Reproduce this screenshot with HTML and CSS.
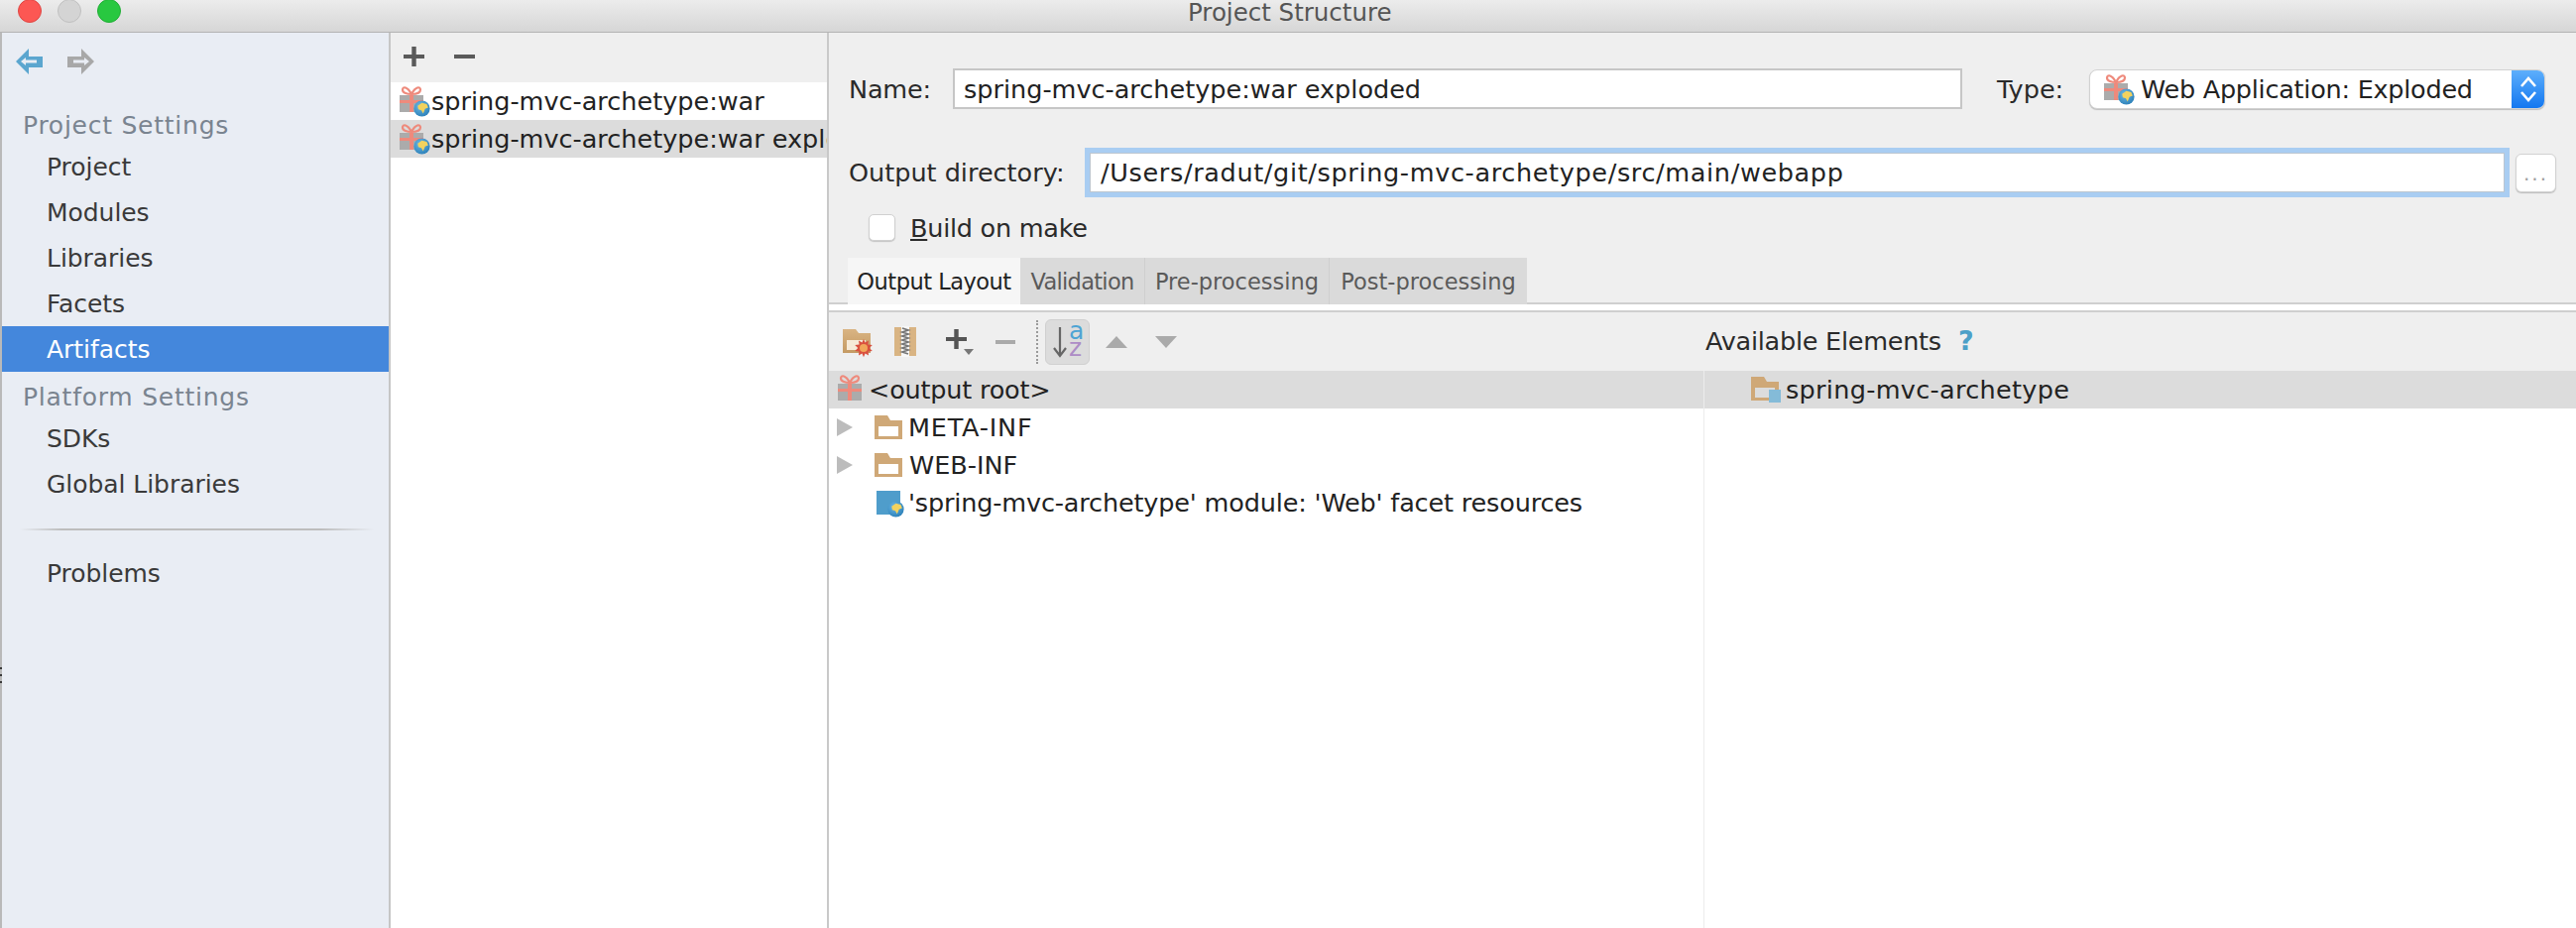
FILE: index.html
```html
<!DOCTYPE html>
<html lang="en">
<head>
<meta charset="utf-8">
<title>Project Structure</title>
<link rel="stylesheet" href="styles.css">
</head>
<body>
<svg class="defs" width="0" height="0" aria-hidden="true">
  <defs>
    <radialGradient id="sea" cx="40%" cy="35%" r="70%"><stop offset="0" stop-color="#6db8e4"/><stop offset="1" stop-color="#2a7fb8"/></radialGradient>
    <linearGradient id="tan" x1="0" y1="0" x2="0" y2="1"><stop offset="0" stop-color="#d9b483"/><stop offset="1" stop-color="#c49a63"/></linearGradient>
    <symbol id="globe" viewBox="0 0 16 16">
      <circle cx="8" cy="8" r="7.6" fill="url(#sea)"/>
      <path d="M4 5.500 8 2.600l4.600 1.200L14 7l-3 1.200-1.800 4.600-1.700-3.200L4.600 8.600z" fill="#f2d25e"/>
    </symbol>
    <symbol id="gift" viewBox="0 0 32 32">
      <rect x="1" y="10" width="24" height="17" fill="#ababab"/>
      <rect x="11" y="10" width="4" height="17" fill="#ee8a7c"/>
      <rect x="1" y="15" width="24" height="3" fill="#ee8a7c"/>
      <path d="M13 9C9 9 4 8 4 4.500 4 1 9 1 13 9c4-8 9-8 9-4.500S17 9 13 9z" fill="none" stroke="#ee8a7c" stroke-width="2.200"/>
    </symbol>
    <symbol id="gift-web" viewBox="0 0 32 32">
      <use href="#gift" width="32" height="32"/>
      <use href="#globe" x="15" y="15" width="17" height="17"/>
    </symbol>
    <symbol id="folder" viewBox="0 0 28 24">
      <path fill="#cfa877" fill-rule="evenodd" d="M0 0h13l3 5h12v19H0zM4 11v10h20V11z"/>
    </symbol>
  </defs>
</svg>
<div class="window">
  <span class="edge-mark"></span>
  <header class="titlebar">
    <div class="lights">
      <span class="light light-red"></span>
      <span class="light light-gray"></span>
      <span class="light light-green"></span>
    </div>
    <div class="title">Project Structure</div>
  </header>
  <div class="main">
    <aside class="sidebar">
      <div class="history">
        <svg class="hist-icon" viewBox="0 0 27 26"><path fill="#5ba6cf" d="M13 0 0 13l13 13v-7h14V8H13z"/><path fill="#e9edf4" d="M9 11.500h12v3H9z"/><path fill="#e9edf4" d="M5 13l5-4v8z"/></svg>
        <svg class="hist-icon" viewBox="0 0 27 26"><path fill="#a8a8a8" d="M14 0l13 13-13 13v-7H0V8h14z"/><path fill="#e9edf4" d="M6 11.500h12v3H6z"/><path fill="#e9edf4" d="M22 13l-5-4v8z"/></svg>
      </div>
      <div class="nav-heading">Project Settings</div>
      <div class="nav-item">Project</div>
      <div class="nav-item">Modules</div>
      <div class="nav-item">Libraries</div>
      <div class="nav-item">Facets</div>
      <div class="nav-item nav-selected">Artifacts</div>
      <div class="nav-heading">Platform Settings</div>
      <div class="nav-item">SDKs</div>
      <div class="nav-item">Global Libraries</div>
      <div class="nav-sep"></div>
      <div class="nav-item">Problems</div>
    </aside>
    <section class="artifacts">
      <div class="artifacts-bar">
        <svg class="glyph" viewBox="0 0 21 20"><path fill="#5a5a5a" d="M8.300 0h4.400v7.900H21v4.200h-8.300V20H8.300v-7.900H0V7.900h8.300z"/></svg>
        <svg class="glyph glyph-minus" viewBox="0 0 21 20"><path fill="#5a5a5a" d="M0 8h21v4H0z"/></svg>
      </div>
      <div class="art-row"><svg class="gift-icon"><use href="#gift-web"/></svg><span class="art-text">spring-mvc-archetype:war</span></div>
      <div class="art-row row-selected"><svg class="gift-icon"><use href="#gift-web"/></svg><span class="art-text">spring-mvc-archetype:war exploded</span></div>
    </section>
    <section class="editor">
      <div class="form-row row-name">
        <label class="label label-name">Name:</label>
        <div class="field field-name">spring-mvc-archetype:war exploded</div>
        <label class="label label-type">Type:</label>
        <div class="combo">
          <svg class="combo-icon"><use href="#gift-web"/></svg>
          <span class="combo-text">Web Application: Exploded</span>
          <span class="stepper">
            <svg width="16" height="36" viewBox="0 0 16 36"><path d="M1 15l7-8 7 8M1 21l7 8 7-8" fill="none" stroke="#fff" stroke-width="2.600"/></svg>
          </span>
        </div>
      </div>
      <div class="form-row row-output">
        <label class="label label-output">Output directory:</label>
        <div class="field field-output">/Users/radut/git/spring-mvc-archetype/src/main/webapp</div>
        <div class="browse">...</div>
      </div>
      <div class="form-row row-check">
        <span class="checkbox"></span>
        <span class="check-label"><u>B</u>uild on make</span>
      </div>
      <div class="tabs">
        <div class="tab tab-active tab-output">Output Layout</div>
        <div class="tab tab-validation">Validation</div>
        <div class="tab tab-pre">Pre-processing</div>
        <div class="tab tab-post">Post-processing</div>
      </div>
      <div class="tab-band"></div>
      <div class="tools">
        <div class="tools-left">
          <svg class="tool tool-burst" viewBox="0 0 30 28">
            <path fill="url(#tan)" d="M1 1h13l3 4h12v20H1z"/>
            <path fill="#f6ead8" d="M5 12h19v10H5z"/>
            <g transform="translate(2 2)">
              <path fill="#d9503f" d="M20 9l1.600 3.600 3.400-2-.6 4 4.400.4-3 3 3 3-4.200.4.400 4-3.400-2-1.600 3.800-1.600-3.800-3.400 2 .4-4-4.200-.4 3-3-3-3 4.400-.4-.6-4 3.400 2z"/>
              <circle cx="20" cy="18" r="4" fill="#f2a65a"/>
            </g>
          </svg>
          <svg class="tool tool-zip" viewBox="0 0 22 31">
            <path fill="#d9b483" d="M0 1h7v29H0zM15 1h7v29h-7z"/>
            <path fill="#f7f7f7" d="M7 0h8v31H7z"/>
            <path fill="none" stroke="#777" stroke-width="1.800" d="M8 2l6 2-6 2 6 2-6 2 6 2-6 2 6 2-6 2 6 2-6 2 6 2-6 2 6 2"/>
          </svg>
          <svg class="tool tool-plus" viewBox="0 0 28 26">
            <path fill="#555" d="M8.300 0h4.400v7.900H21v4.200h-8.300V20H8.300v-7.900H0V7.900h8.300z"/>
            <path fill="#777" d="M18 20h10l-5 6z"/>
          </svg>
          <svg class="tool tool-minus" viewBox="0 0 20 4"><path fill="#aaa" d="M0 0h20v4H0z"/></svg>
          <span class="tool-dots"></span>
          <span class="sort-btn">
            <svg class="sort-icon" width="30" height="38" viewBox="0 0 30 38">
              <path d="M7 4v29M1 25l6 8 6-8" fill="none" stroke="#666" stroke-width="2.200"/>
              <text x="16" y="16" class="sort-a">a</text>
              <text x="16" y="33" class="sort-z">z</text>
            </svg>
          </span>
          <svg class="tool tool-up" viewBox="0 0 22 12"><path fill="#aaa" d="M11 0l11 12H0z"/></svg>
          <svg class="tool tool-down" viewBox="0 0 22 12"><path fill="#aaa" d="M0 0h22L11 12z"/></svg>
        </div>
        <div class="tools-right">
          <span class="avail">Available Elements</span>
          <span class="help">?</span>
        </div>
      </div>
      <div class="panes">
        <div class="pane pane-left">
          <div class="tree-row row-selected">
            <svg class="tree-gift"><use href="#gift"/></svg>
            <span class="tree-text text-root">&lt;output root&gt;</span>
          </div>
          <div class="tree-row">
            <span class="arrow"></span>
            <svg class="tree-folder"><use href="#folder"/></svg>
            <span class="tree-text text-meta">META-INF</span>
          </div>
          <div class="tree-row">
            <span class="arrow"></span>
            <svg class="tree-folder"><use href="#folder"/></svg>
            <span class="tree-text">WEB-INF</span>
          </div>
          <div class="tree-row tree-facet">
            <span class="facet">
              <svg class="facet-globe"><use href="#globe"/></svg>
            </span>
            <span class="tree-text text-facet">'spring-mvc-archetype' module: 'Web' facet resources</span>
          </div>
        </div>
        <div class="pane pane-right">
          <div class="tree-row row-selected row-avail">
            <span class="avail-folder">
              <svg class="tree-folder"><use href="#folder"/></svg>
              <span class="folder-mod"></span>
            </span>
            <span class="tree-text text-avail">spring-mvc-archetype</span>
          </div>
        </div>
      </div>
    </section>
  </div>
</div>
</body>
</html>
```
FILE: styles.css
```css
* { box-sizing: border-box; }
html, body { margin: 0; padding: 0; background: #fff; }
body {
  font-family: "DejaVu Sans", "Liberation Sans", sans-serif;
  font-size: 25.5px;
  color: #2a2a2a;
  overflow: hidden;
}
.defs { position: absolute; }
.window { width: 2598px; height: 936px; display: flex; flex-direction: column; position: relative; }
.edge-mark {
  position: absolute;
  left: 0;
  top: 673px;
  width: 2px;
  height: 17px;
  background: repeating-linear-gradient(#3a3a3a 0 2px, transparent 2px 7px);
}

.titlebar {
  height: 33px;
  flex: none;
  display: flex;
  align-items: center;
  background: linear-gradient(#ececec, #d6d6d6);
  border-bottom: 1px solid #b4b4b4;
  position: relative;
  overflow: hidden;
}
.lights { display: flex; gap: 16px; padding-left: 18px; margin-top: -11px; }
.light { width: 24px; height: 24px; border-radius: 50%; display: block; }
.light-red { background: #fc5753; border: 1px solid #df4744; }
.light-gray { background: #d4d4d4; border: 1px solid #c0c0c0; }
.light-green { background: #28c840; border: 1px solid #20ae35; }
.title {
  position: absolute;
  left: 1198px;
  top: 0;
  line-height: 25px;
  font-size: 24.500px;
  color: #555;
  white-space: nowrap;
}

.main { flex: 1; display: flex; min-height: 0; }

.sidebar {
  width: 394px;
  flex: none;
  border-left: 2px solid #b9b9b9;
  background: #e9edf4;
  border-right: 2px solid #c6c6c6;
}
.history { height: 68px; display: flex; gap: 25px; padding: 16px 0 0 14px; }
.hist-icon { width: 27px; height: 26px; display: block; }
.nav-heading {
  height: 44px;
  padding: 7px 0 0 21px;
  line-height: 38px;
  color: #7a8490;
  font-size: 25px;
  letter-spacing: .75px;
  white-space: nowrap;
}
.nav-item {
  height: 46px;
  line-height: 46px;
  padding: 1px 0 0 45px;
  color: #3a3a3a;
  font-size: 25px;
  letter-spacing: -.05px;
  white-space: nowrap;
}
.nav-selected { background: #4487dc; color: #fff; }
.nav-sep {
  height: 2px;
  margin: 22px 15px 20px 18px;
  background: linear-gradient(90deg, transparent, #bdbdbd 12%, #bdbdbd 85%, transparent);
}

.artifacts { width: 442px; flex: none; background: #fff; border-right: 2px solid #c9c9c9; overflow: hidden; }
.artifacts-bar { height: 50px; background: #efefef; display: flex; align-items: flex-start; padding: 14px 0 0 13px; }
.glyph { width: 21px; height: 20px; display: block; }
.glyph-minus { margin-left: 30px; }
.art-row { height: 38px; display: flex; align-items: center; padding-left: 8px; white-space: nowrap; }
.gift-icon { width: 32px; height: 32px; flex: none; margin-right: 1px; }
.art-text { color: #222; }
.row-selected { background: #dcdcdc; }

.editor { flex: 1; min-width: 0; display: flex; flex-direction: column; background: #efefef; }
.form-row { display: flex; align-items: center; padding-left: 20px; flex: none; }
.row-name { margin-top: 36px; height: 41px; padding-right: 31px; }
.row-output { margin-top: 39px; height: 50px; padding-right: 20px; }
.row-check { margin-top: 17px; height: 27px; padding-left: 40px; }
.label { color: #2a2a2a; white-space: nowrap; }
.label-name { width: 105px; flex: none; letter-spacing: -.2px; }
.label-type { width: 93px; margin-left: 35px; flex: none; }
.label-output { width: 243px; flex: none; }
.field {
  background: #fff;
  color: #222;
  white-space: nowrap;
  display: flex;
  align-items: center;
}
.field-name { flex: 1; height: 41px; border: 2px solid #c6c6c6; padding-left: 9px; }
.field-output {
  flex: 1;
  height: 40px;
  padding-left: 10px;
  border: 1px solid #bcc6d0;
  box-shadow: 0 0 0 5px #a9cdf2;
  letter-spacing: .65px;
}
.combo {
  width: 460px;
  height: 40px;
  flex: none;
  display: flex;
  align-items: center;
  background: #fff;
  border: 1px solid #d2d2d2;
  border-radius: 8px;
  overflow: hidden;
  padding-left: 13px;
  box-shadow: 0 1px 1px #bdbdbd;
}
.combo-icon { width: 32px; height: 32px; flex: none; }
.combo-text { margin-left: 6px; flex: 1; white-space: nowrap; color: #222; letter-spacing: -.25px; }
.stepper {
  width: 33px;
  height: 40px;
  flex: none;
  display: flex;
  align-items: center;
  justify-content: center;
  background: linear-gradient(#5fb0fc, #1176f0);
}
.browse {
  width: 41px;
  height: 39px;
  flex: none;
  margin-left: 11px;
  background: #fff;
  border: 1px solid #d2d2d2;
  border-radius: 6px;
  box-shadow: 0 1px 1px #bdbdbd;
  color: #a0a0a0;
  font-size: 20px;
  letter-spacing: 2px;
  text-align: center;
  line-height: 38px;
}
.checkbox {
  width: 27px;
  height: 27px;
  flex: none;
  background: #fff;
  border: 1px solid #d0d0d0;
  border-radius: 5px;
  box-shadow: 0 1px 1px #c4c4c4;
}
.check-label { margin-left: 15px; white-space: nowrap; color: #2a2a2a; letter-spacing: -.25px; }

.tabs {
  margin-top: 17px;
  height: 47px;
  flex: none;
  display: flex;
  padding-left: 19px;
  border-bottom: 2px solid #cfcfcf;
}
.tab {
  height: 47px;
  background: #dadada;
  border-right: 1px solid #cfcfcf;
  display: flex;
  align-items: center;
  justify-content: center;
  font-size: 22.500px;
  color: #5a5a5a;
  white-space: nowrap;
}
.tab-active { background: #f6f6f6; color: #222; border-right: 0; }
.tab-output { width: 174px; letter-spacing: -.5px; }
.tab-validation { width: 126px; letter-spacing: -.7px; }
.tab-pre { width: 186px; }
.tab-post { width: 199px; border-right: 0; }
.tab-band { height: 8px; flex: none; background: #fff; border-bottom: 2px solid #cfcfcf; }

.tools { height: 59px; flex: none; display: flex; }
.tools-left {
  width: 882px;
  flex: none;
  display: flex;
  align-items: center;
  padding-left: 13px;
  position: relative;
}
.tool { display: block; flex: none; }
.tool-burst { width: 30px; height: 28px; overflow: visible; }
.tool-zip { width: 22px; height: 31px; margin-left: 23px; }
.tool-plus { width: 28px; height: 26px; margin-left: 30px; }
.tool-minus { width: 20px; height: 4px; margin-left: 22px; }
.tool-dots { width: 0; height: 44px; border-left: 2px dotted #9a9a9a; margin-left: 21px; flex: none; }
.sort-btn {
  width: 45px;
  height: 46px;
  flex: none;
  margin-left: 7px;
  background: #dcdcdc;
  border: 1px solid #d0d0d0;
  border-radius: 6px;
  display: flex;
  align-items: center;
  justify-content: center;
}
.sort-icon { overflow: visible; }
.sort-a, .sort-z { font-size: 25px; font-family: "DejaVu Sans", sans-serif; }
.sort-a { fill: #4ea4d4; }
.sort-z { fill: #ad8cc6; }
.tool-up { width: 22px; height: 12px; margin-left: 16px; }
.tool-down { width: 22px; height: 12px; margin-left: 28px; }
.tools-right { flex: 1; display: flex; align-items: center; padding-left: 2px; }
.avail { white-space: nowrap; color: #2a2a2a; letter-spacing: -.25px; margin-top: -2px; }
.help { color: #4ca0c8; font-weight: bold; font-size: 27px; margin-left: 17px; margin-top: -2px; }

.panes { flex: 1; display: flex; min-height: 0; background: #fff; }
.pane-left { width: 882px; flex: none; overflow: hidden; }
.pane-right { flex: 1; border-left: 1px solid #ececec; }
.tree-row { height: 38px; display: flex; align-items: center; padding-left: 8px; white-space: nowrap; color: #222; }
.tree-gift { width: 32px; height: 32px; flex: none; }
.text-root { margin-left: 0; letter-spacing: -.2px; }
.text-meta { letter-spacing: .8px; margin-left: -1px; }
.text-facet { letter-spacing: -.16px; }
.text-avail { letter-spacing: .3px; }
.arrow {
  width: 0;
  height: 0;
  flex: none;
  border-left: 16px solid #bcbcbc;
  border-top: 9px solid transparent;
  border-bottom: 9px solid transparent;
}
.tree-folder { width: 28px; height: 24px; flex: none; display: block; }
.arrow + .tree-folder { margin-left: 22px; margin-right: 7px; }
.tree-facet { padding-left: 48px; }
.facet {
  width: 24px;
  height: 24px;
  flex: none;
  background: #4f9dcb;
  position: relative;
  margin-right: 8px;
}
.facet-globe { position: absolute; left: 11px; top: 10px; width: 17px; height: 17px; }
.row-avail { padding-left: 47px; }
.avail-folder { position: relative; width: 30px; height: 26px; flex: none; margin-right: 5px; }
.folder-mod { position: absolute; right: 0; bottom: 0; width: 12px; height: 13px; background: #84bbd8; }
```
